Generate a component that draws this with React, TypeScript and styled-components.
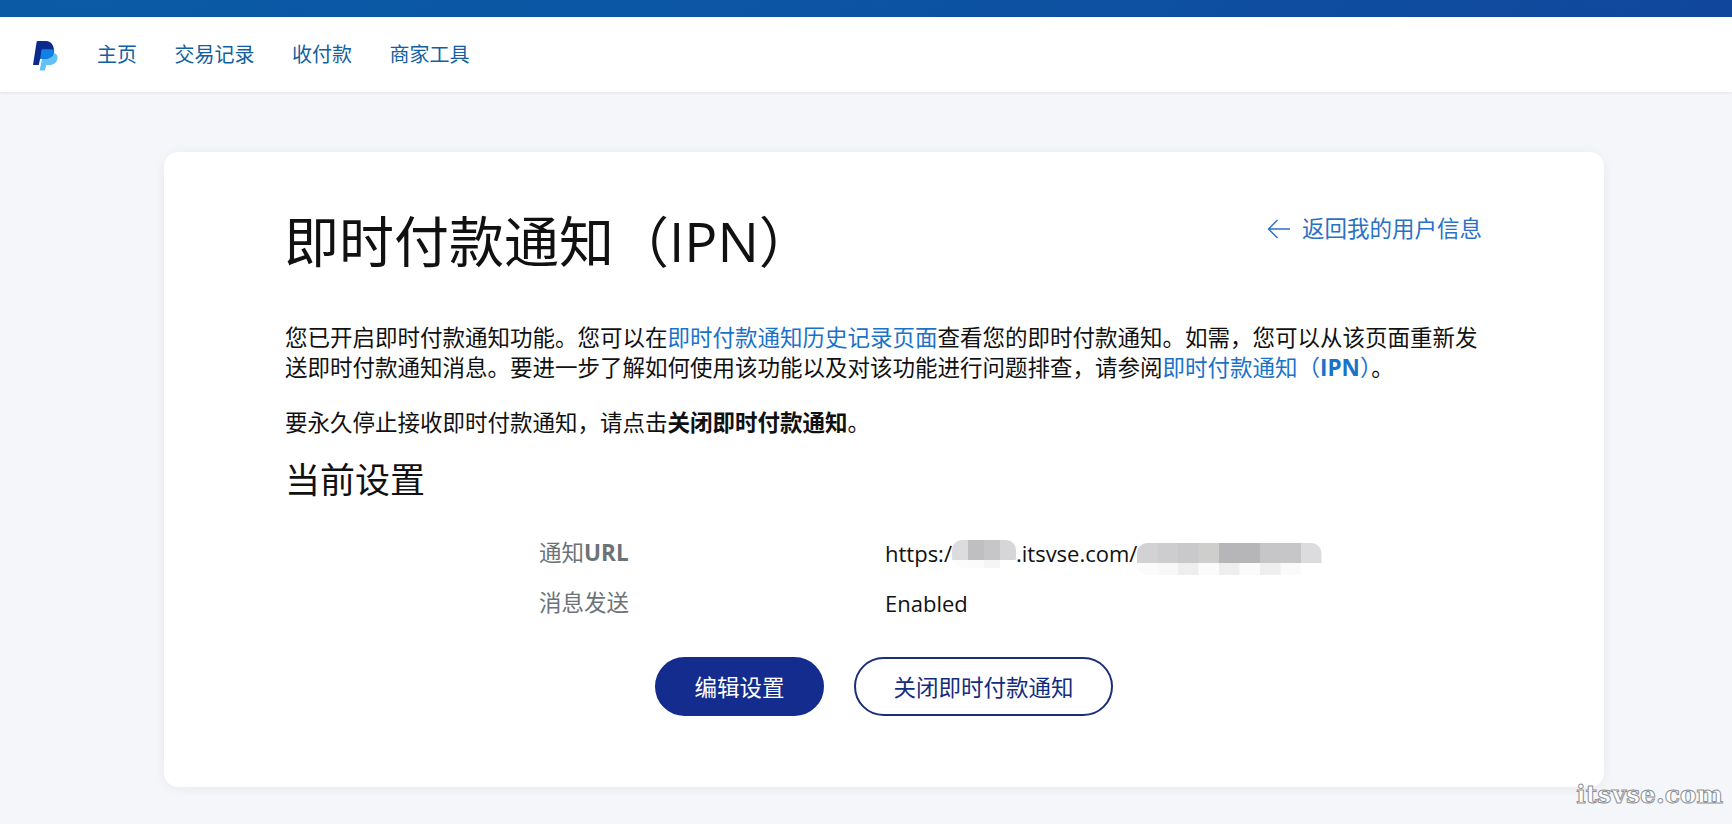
import React from 'react'
import styled, { createGlobalStyle } from 'styled-components'

const GlobalStyle = createGlobalStyle`
  html, body {
    margin: 0;
    padding: 0;
    background: #f5f6fa;
  }
  body {
    font-family: 'Open Sans', 'Noto Sans CJK SC', sans-serif;
    color: #111;
  }
`

const Page = styled.div`
  position: relative;
  height: 824px;
  overflow: hidden;
  background: #f5f6fa;
`

const TopBar = styled.div`
  height: 17px;
  background: linear-gradient(90deg, #0a5ba6 0%, #0c55a4 45%, #10479c 100%);
`

const Nav = styled.nav`
  display: flex;
  align-items: center;
  height: 75px;
  padding-left: 33px;
  background: #fff;
  box-shadow: 0 1px 3px rgba(0, 0, 0, 0.08);
`

const NavLogo = styled.svg`
  width: 25px;
  height: 30px;
  margin: 2px 39px 0 0;
`

const NavLink = styled.a`
  font-size: 20px;
  line-height: 28px;
  color: #12609f;
  margin-right: 37.5px;
  text-decoration: none;
`

const Card = styled.main`
  box-sizing: border-box;
  width: 1440px;
  height: 635px;
  margin: 60px 0 0 164px;
  padding: 52px 122px 0;
  background: #fff;
  border-radius: 14px;
  box-shadow: 0 1px 12px rgba(0, 0, 0, 0.06);
`

const TitleRow = styled.div`
  display: flex;
  justify-content: space-between;
  align-items: flex-start;
  height: 119px;
`

const Title = styled.h1`
  margin: 0 0 0 -2px;
  font-size: 55px;
  line-height: 74px;
  font-weight: 400;
  color: #111;
`

const BackLink = styled.a`
  display: flex;
  align-items: center;
  gap: 11px;
  margin-top: 10px;
  font-size: 22.5px;
  line-height: 30px;
  color: #2a71c5;
  text-decoration: none;
`

const Paragraph = styled.p`
  margin: 0 0 25px -1px;
  font-size: 22.5px;
  line-height: 30px;
  color: #111;
`

const TextLink = styled.a`
  color: #1a72c9;
  text-decoration: none;
`

const SubTitle = styled.h2`
  margin: -7px 0 24px -1px;
  font-size: 35px;
  line-height: 48px;
  font-weight: 400;
  color: #111;
`

const SettingRow = styled.div`
  display: grid;
  grid-template-columns: 346px 1fr;
  height: 50px;
  padding-left: 253px;
  font-size: 22px;
  line-height: 50px;
`

const SettingLabel = styled.div`
  font-size: 22.5px;
  color: #6c7378;
`

const SettingValue = styled.div`
  display: flex;
  align-items: center;
  color: #111;
`

const Mosaic = styled.svg`
  display: block;
  flex: none;
`

const Buttons = styled.div`
  display: flex;
  gap: 30px;
  margin: 29px 0 0 369px;
`

const Button = styled.a<{ $primary?: boolean }>`
  box-sizing: border-box;
  display: flex;
  align-items: center;
  justify-content: center;
  height: 59px;
  width: ${({ $primary }) => ($primary ? '169px' : '259px')};
  border-radius: 30px;
  font-size: 22.5px;
  color: ${({ $primary }) => ($primary ? '#fff' : '#142c7e')};
  background: ${({ $primary }) => ($primary ? '#142c8e' : '#fff')};
  border: 2px solid ${({ $primary }) => ($primary ? '#142c8e' : '#1b2f78')};
`

const Watermark = styled.div`
  position: absolute;
  right: 9px;
  bottom: 14px;
  font-family: 'DejaVu Serif', serif;
  font-weight: 700;
  font-size: 25px;
  line-height: 30px;
  color: #fff;
  -webkit-text-stroke: 1px #8f9296;
`

const HOST_TOP = ['#dcdcde', '#bfbfc1', '#c6c6c8', '#d6d6d8']
const HOST_BOTTOM = ['#fcfcfc', '#fbfbfb', '#f5f5f5', '#ffffff']
const PATH_TOP = ['#d2d2d4', '#cdcdcf', '#c9c9cb', '#cececc', '#b6b6b9', '#b6b6b9', '#c6c6c8', '#c6c6c8', '#dcdcde']
const PATH_BOTTOM = ['#fbfbfb', '#f8f8f8', '#eeeeef', '#fbfbfb', '#eeeeef', '#fbfbfb', '#eeeeef', '#fafafa', '#ffffff']

function PayPalLogo() {
  return (
    <NavLogo viewBox="0 0 25 30">
      <path d="M9 18 6.600 29.400h5.400l1.300-5.400h3.200c4.200 0 7.400-2.800 8-6.600.4-2.400-.7-4.200-2.800-5.200L9 18z" fill="#62c1f6" />
      <path d="M4.800 0C4.200 0 3.700.4 3.600 1L0 24h5.800l1.300-6.300h5.600c4.600 0 7.600-2.900 8.200-6.600C21.600 5.500 18.500 0 13 0H4.800z" fill="#0a2a8c" />
      <path d="M8.600 8.600 7.100 17.700h5.600c4.600 0 7.900-2.400 8.500-6.600.1-.8.100-1.300 0-2.200-.8-.5-1.700-.7-2.900-.7H9.800c-.6 0-1.100.2-1.200.4z" fill="#0f80e8" />
    </NavLogo>
  )
}

function BlurBlock({
  id,
  top,
  bottom,
  cellW,
  y,
  topH,
  bottomH
}: {
  id: string
  top: string[]
  bottom: string[]
  cellW: number
  y: number
  topH: number
  bottomH: number
}) {
  const width = top.length * cellW
  return (
    <Mosaic width={width} height={44} viewBox={`0 0 ${width} 44`}>
      <clipPath id={id}>
        <rect x={0} y={y} width={width} height={topH + bottomH} rx={10} />
      </clipPath>
      <g clipPath={`url(#${id})`}>
        {top.map((fill, i) => (
          <rect key={`t${i}`} x={i * cellW} y={y} width={cellW + 0.5} height={topH} fill={fill} />
        ))}
        {bottom.map((fill, i) => (
          <rect key={`b${i}`} x={i * cellW} y={y + topH} width={cellW + 0.5} height={bottomH} fill={fill} />
        ))}
      </g>
    </Mosaic>
  )
}

export default function App() {
  return (
    <Page>
      <GlobalStyle />
      <TopBar />
      <Nav>
        <PayPalLogo />
        <NavLink>主页</NavLink>
        <NavLink>交易记录</NavLink>
        <NavLink>收付款</NavLink>
        <NavLink>商家工具</NavLink>
      </Nav>
      <Card>
        <TitleRow>
          <Title>即时付款通知（IPN）</Title>
          <BackLink>
            <svg width="24" height="20" viewBox="0 0 24 20" fill="none" stroke="#2a71c5" strokeWidth="1.4">
              <path d="M23 10H1.500M10.500 1 1.500 10l9 9" />
            </svg>
            返回我的用户信息
          </BackLink>
        </TitleRow>
        <Paragraph>
          您已开启即时付款通知功能。您可以在<TextLink>即时付款通知历史记录页面</TextLink>查看您的即时付款通知。如需，您可以从该页面重新发送即时付款通知消息。要进一步了解如何使用该功能以及对该功能进行问题排查，请参阅<TextLink>即时付款通知（<b>IPN</b>）</TextLink>。
        </Paragraph>
        <Paragraph>
          要永久停止接收即时付款通知，请点击<b>关闭即时付款通知</b>。
        </Paragraph>
        <SubTitle>当前设置</SubTitle>
        <SettingRow>
          <SettingLabel>
            通知<b>URL</b>
          </SettingLabel>
          <SettingValue>
            https:/
            <BlurBlock id="host" top={HOST_TOP} bottom={HOST_BOTTOM} cellW={16} y={9} topH={20} bottomH={8} />
            .itsvse.com/
            <BlurBlock id="path" top={PATH_TOP} bottom={PATH_BOTTOM} cellW={20.500} y={12} topH={20} bottomH={12} />
          </SettingValue>
        </SettingRow>
        <SettingRow>
          <SettingLabel>消息发送</SettingLabel>
          <SettingValue>Enabled</SettingValue>
        </SettingRow>
        <Buttons>
          <Button $primary>编辑设置</Button>
          <Button>关闭即时付款通知</Button>
        </Buttons>
      </Card>
      <Watermark>itsvse.com</Watermark>
    </Page>
  )
}
